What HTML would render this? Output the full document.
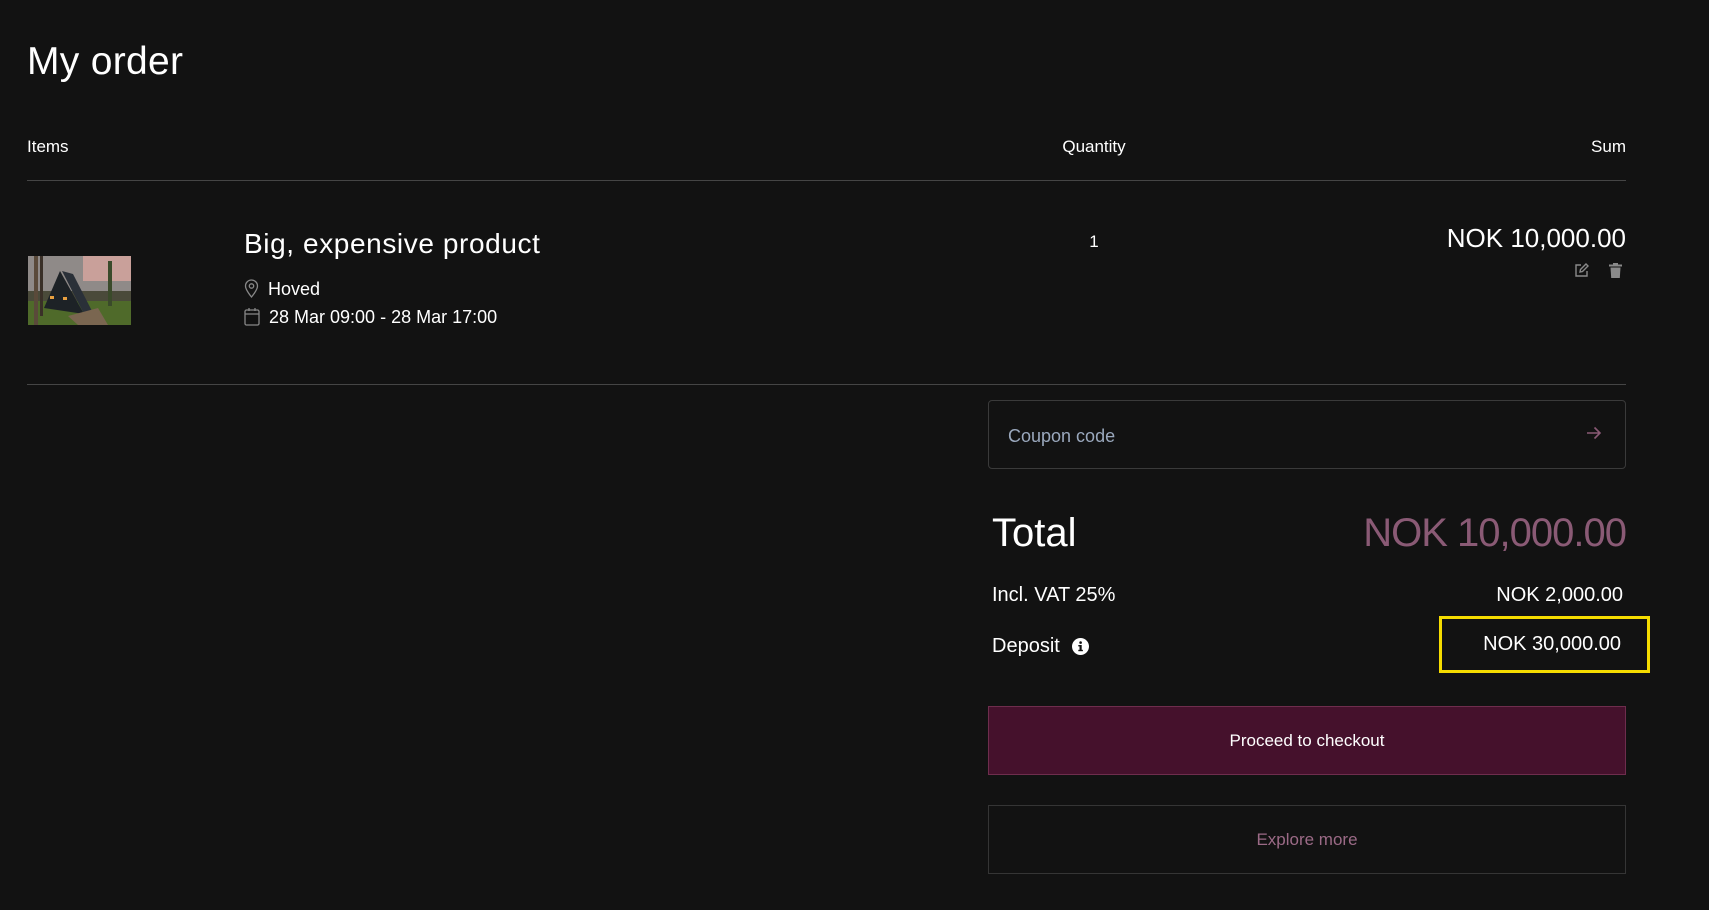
<!DOCTYPE html>
<html><head><meta charset="utf-8"><style>
*{margin:0;padding:0;box-sizing:border-box}
body{width:1709px;height:910px;background:#121212;color:#fff;font-family:"Liberation Sans",sans-serif;position:relative;overflow:hidden}
.a{position:absolute;white-space:nowrap}
.line{position:absolute;left:27px;width:1599px;height:1px;background:#454545}
</style></head><body>
<div class="a" style="left:27px;top:40px;font-size:39px;letter-spacing:0.3px">My order</div>
<div class="a" style="left:27px;top:137px;font-size:17px;">Items</div>
<div class="a" style="left:1094px;top:137px;font-size:17px;transform:translateX(-50%)">Quantity</div>
<div class="a" style="right:83px;top:137px;font-size:17px;">Sum</div>
<div class="line" style="top:180px"></div>

<svg class="a" style="left:28px;top:256px" width="103" height="69" viewBox="0 0 103 69">
<rect width="103" height="69" fill="#4a4a3a"/>
<rect width="103" height="35" fill="#8f8a88"/>
<rect x="55" y="0" width="48" height="25" fill="#c9a09a"/>
<rect y="45" width="103" height="24" fill="#4f6a2a"/>
<polygon points="32,15 16,52 56,58" fill="#1d2226"/>
<polygon points="34,15 56,58 64,55 45,18" fill="#2a3038"/>
<path d="M40 60 L70 52 L80 69 L50 69Z" fill="#7a6650"/>
<rect x="6" y="0" width="4" height="69" fill="#5a4a3a"/><rect x="12" y="0" width="3" height="60" fill="#3a3028"/>
<rect x="80" y="5" width="4" height="45" fill="#3a4a2a"/>
<rect x="22" y="40" width="4" height="3" fill="#e8a040"/><rect x="35" y="41" width="4" height="3" fill="#e8a040"/>
</svg>

<div class="a" style="left:244px;top:228px;font-size:28px;letter-spacing:0.6px">Big, expensive product</div>
<svg class="a" style="left:244px;top:279px" width="15" height="19" viewBox="0 0 15 19" fill="none" stroke="#888" stroke-width="1.3"><path d="M7.5 18C7.5 18 1.5 11 1.5 7A6 6 0 0 1 13.5 7C13.5 11 7.5 18 7.5 18Z"/><circle cx="7.5" cy="7" r="2.2"/></svg>
<div class="a" style="left:268px;top:279px;font-size:18px;">Hoved</div>
<svg class="a" style="left:244px;top:307px" width="16" height="19" viewBox="0 0 16 19" fill="none" stroke="#888" stroke-width="1.3"><rect x="1" y="3" width="14" height="15" rx="1.5"/><path d="M1 7H15M5 1V4M11 1V4"/></svg>
<div class="a" style="left:269px;top:307px;font-size:18px;">28 Mar 09:00 - 28 Mar 17:00</div>

<div class="a" style="left:1094px;top:232px;font-size:17px;transform:translateX(-50%)">1</div>
<div class="a" style="right:83px;top:223px;font-size:26px;">NOK 10,000.00</div>
<svg class="a" style="left:1574px;top:263px" width="15" height="15" viewBox="0 0 15 15" fill="none" stroke="#8a8a8a" stroke-width="1.4"><path d="M7 2H2V13H13V8"/><path d="M6 9L6.5 6.5L12 1L14 3L8.5 8.5Z"/></svg>
<svg class="a" style="left:1609px;top:263px" width="13" height="15" viewBox="0 0 13 15" fill="#8a8a8a"><rect x="0" y="1.5" width="13" height="2"/><rect x="4" y="0" width="5" height="2"/><path d="M1.5 4.5H11.5L10.8 15H2.2Z"/></svg>

<div class="line" style="top:384px"></div>

<div class="a" style="left:988px;top:400px;width:638px;height:69px;border:1px solid #3a3a3a;border-radius:4px"></div>
<div class="a" style="left:1008px;top:426px;font-size:18px;color:#9aa8bd;">Coupon code</div>
<svg class="a" style="left:1586px;top:426px" width="16" height="14" viewBox="0 0 16 14" fill="none" stroke="#8a5a75" stroke-width="1.6"><path d="M1 7H14M8.5 1.5L14 7L8.5 12.5"/></svg>

<div class="a" style="left:992px;top:511px;font-size:40px;">Total</div>
<div class="a" style="right:83px;top:511px;font-size:40px;color:#8a5a75;letter-spacing:-1px">NOK 10,000.00</div>
<div class="a" style="left:992px;top:584px;font-size:20px;">Incl. VAT 25%</div>
<div class="a" style="right:86px;top:584px;font-size:20px;">NOK 2,000.00</div>
<div class="a" style="left:992px;top:635px;font-size:20px;">Deposit</div>
<svg class="a" style="left:1072px;top:638px" width="17" height="17" viewBox="0 0 17 17"><circle cx="8.5" cy="8.5" r="8.5" fill="#fff"/><rect x="7.5" y="7" width="2.2" height="6" fill="#121212"/><rect x="6.3" y="7" width="3" height="1.4" fill="#121212"/><rect x="6.3" y="11.8" width="4.6" height="1.4" fill="#121212"/><circle cx="8.6" cy="4.6" r="1.3" fill="#121212"/></svg>
<div class="a" style="left:1439px;top:616px;width:211px;height:57px;border:3px solid #f5dc00"></div>
<div class="a" style="right:88px;top:633px;font-size:20px;">NOK 30,000.00</div>

<div class="a" style="left:988px;top:706px;width:638px;height:69px;background:#45112c;border:1px solid #6e2d4d;display:flex;align-items:center;justify-content:center;font-size:17px;">Proceed to checkout</div>
<div class="a" style="left:988px;top:805px;width:638px;height:69px;border:1px solid #353535;display:flex;align-items:center;justify-content:center;font-size:17px;color:#9b6a86;">Explore more</div>
</body></html>
